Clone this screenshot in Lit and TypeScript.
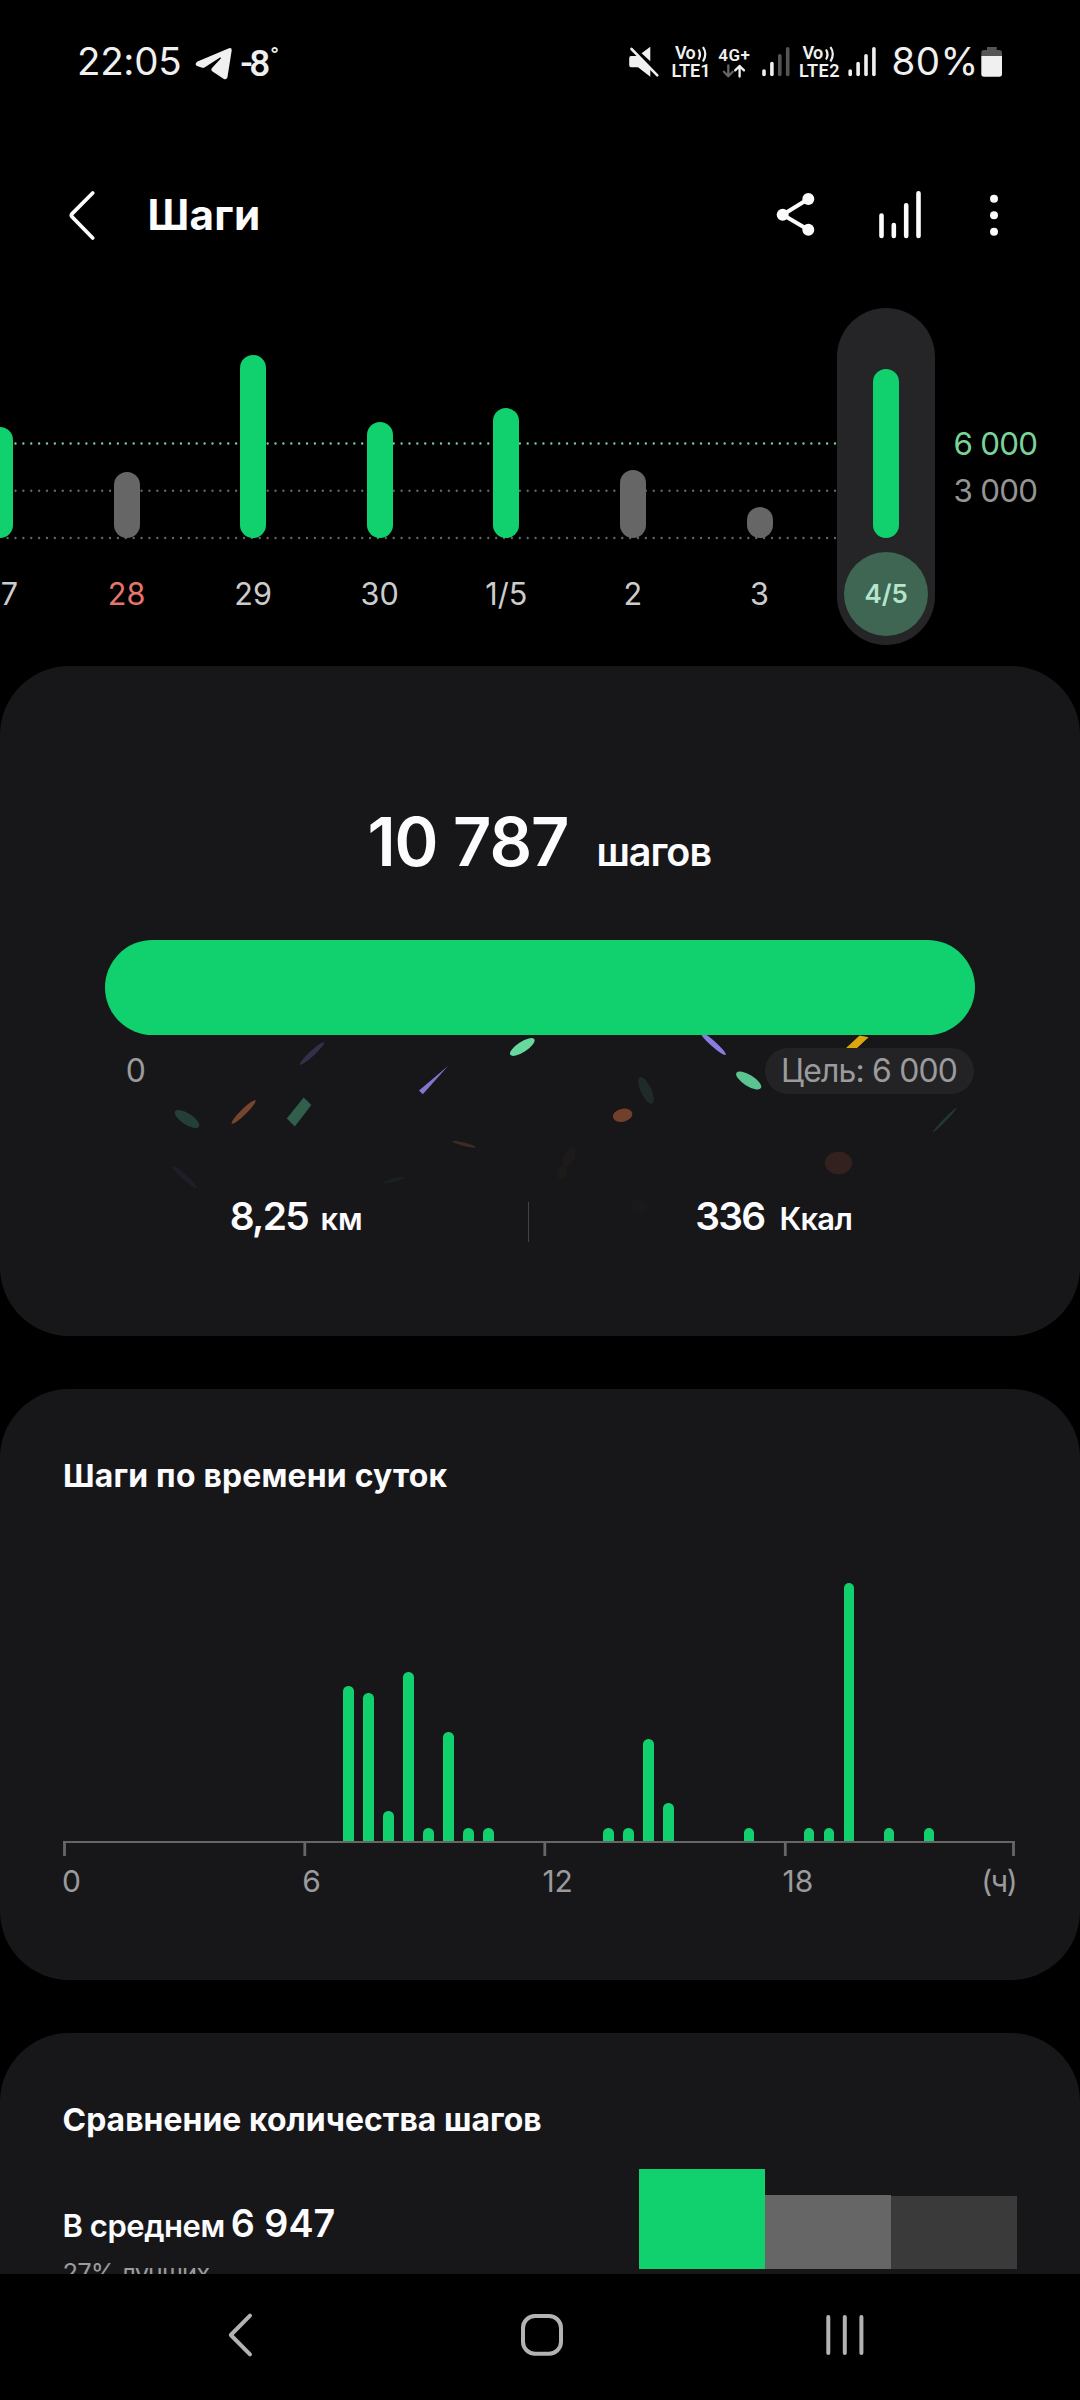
import { LitElement, html, svg, css } from "lit";
import { customElement } from "lit/decorators.js";
import { classMap } from "lit/directives/class-map.js";
import { styleMap } from "lit/directives/style-map.js";

interface Day {
  label: string;
  height: number;
  reached?: boolean;
  holiday?: boolean;
  selected?: boolean;
}

const DAYS: Day[] = [
  { label: "27", height: 111, reached: true },
  { label: "28", height: 66, holiday: true },
  { label: "29", height: 183, reached: true },
  { label: "30", height: 116.5, reached: true },
  { label: "1/5", height: 130.5, reached: true },
  { label: "2", height: 68.5 },
  { label: "3", height: 31 },
  { label: "4/5", height: 169.5, reached: true, selected: true },
];

/* Bar heights keyed by half-hour slot of the day. */
const SLOTS: Record<number, number> = {
  14: 155, 15: 148, 16: 30, 17: 169, 18: 13, 19: 109, 20: 13, 21: 13,
  27: 13, 28: 13, 29: 102, 30: 38, 34: 13, 37: 13, 38: 13, 39: 258, 41: 13, 43: 13,
};

const signal = (x: number, strength: number) => svg`${[69.3, 61.7, 54, 47].map(
  (top, i) => svg`<line x1=${x + 2.2 + i * 7.9} x2=${x + 2.2 + i * 7.9} y1=${top + 1.8} y2="74.4"
    stroke=${i < strength ? "#f0f0f0" : "#555"} stroke-width="3.6" stroke-linecap="round"></line>`
)}`;

@customElement("status-bar")
export class StatusBar extends LitElement {
  static styles = css`
    :host { display: flex; align-items: center; height: 122px; padding: 0 77px; color: #f0f0f0;
      font: 400 38.5px/46px Inter, sans-serif; }
    svg { display: block; flex: none; height: 42px; overflow: visible; font-family: Roboto, sans-serif; font-weight: 600; fill: #f0f0f0; }
    .time { width: 104px; letter-spacing: -0.3px; }
    .plane { width: 38px; margin-left: 14px; }
    .temp { width: 44px; margin-left: 6px; font-size: 37px; font-weight: 500; }
    .system { display: flex; align-items: center; margin-left: auto; }
    .mute { width: 32px; }
    .lte1 { width: 40px; margin-left: 12px; font-size: 18px; }
    .net { width: 34px; margin-left: 6px; font-size: 17px; }
    .sig1 { width: 28px; margin-left: 10px; }
    .lte2 { width: 42px; margin-left: 9px; font-size: 18px; }
    .sig2 { width: 28px; margin-left: 7px; }
    .percent { width: 84px; margin-left: 15.5px; letter-spacing: 0.4px; white-space: nowrap; }
    .battery { width: 22px; margin-left: 5.5px; }
  `;

  private volte(x: number, name: string, width: number) {
    return svg`
      <text x=${x + 2.6} y="59.4" textLength="20.5">Vo</text>
      <path d="M${x + 26} 49.5q3 5 0 10M${x + 30.5} 47q4.6 7 0 14.5" fill="none" stroke="#f0f0f0" stroke-width="2.2"></path>
      <text x=${x - 1} y="77" textLength=${width}>${name}</text>`;
  }

  render() {
    return html`
      <span class="time">22:05</span>
      <svg class="plane" viewBox="195 40 38 42"><path d="M197.5 61.5L229 48.2Q232 47.5 231.7 50.5L227.4 77.5Q226.3 80.3 223.5 78.8L212.5 71.5Q210.5 70 212 68L220.8 58.6Q221.6 56.8 219.6 57.8L204.5 67.4Q203 68 201.5 67.5L197 66Q194 64 197.5 61.5Z"></path></svg>
      <svg class="temp" viewBox="239 40 44 42">
        <text x="240.2 249.3" y="75.5">-8</text><text x="270" y="63.7" font-size="24">°</text>
      </svg>
      <div class="system">
        <svg class="mute" viewBox="628 40 32 42">
          <path d="M631 56H638.5L650.3 68V76.7L638 67.3H631Q629.2 67.3 629.2 65V58.4Q629.2 56 631 56ZM641.6 53.3L650.3 46.7V61.3Z"></path>
          <path d="M631.5 49L657.3 75.3" fill="none" stroke="#f0f0f0" stroke-width="2.6" stroke-linecap="round"></path>
        </svg>
        <svg class="lte1" viewBox="672 40 40 42">${this.volte(672.5, "LTE1", 39)}</svg>
        <svg class="net" viewBox="718 40 34 42">
          <text x="718.3" y="60.5" textLength="31.5">4G+</text>
          <g fill="none" stroke-width="2.3" stroke-linecap="round" stroke-linejoin="round">
            <path d="M728.3 65.5V76M723.9 71.8L728.3 76.2L732.7 71.8" stroke="#666"></path>
            <path d="M739.6 76.5V66M735.2 70.4L739.6 66L744 70.4" stroke="#f0f0f0"></path>
          </g>
        </svg>
        <svg class="sig1" viewBox="762 40 28 42">${signal(761.8, 2)}</svg>
        <svg class="lte2" viewBox="799 40 42 42">${this.volte(800, "LTE2", 40.5)}</svg>
        <svg class="sig2" viewBox="848 40 28 42">${signal(848, 4)}</svg>
        <span class="percent">80%</span>
        <svg class="battery" viewBox="981 40 22 42">
          <path d="M987 47H996.7V50H999.5Q1002 50 1002 52.5V56H981.3V52.5Q981.3 50 983.8 50H987Z" fill="#555"></path>
          <path d="M981.3 56H1002V74Q1002 76.7 999.3 76.7H984Q981.3 76.7 981.3 74Z"></path>
        </svg>
      </div>`;
  }
}

@customElement("title-bar")
export class TitleBar extends LitElement {
  static styles = css`
    :host { display: flex; align-items: center; height: 185px; padding: 0 79.7px 0 66px; color: #fcfcfc; }
    svg { display: block; flex: none; height: 56px; fill: currentColor; }
    h1 { margin: 0 auto 0 51.4px; font: 650 42.2px/56px Inter, sans-serif; letter-spacing: 0.3px; }
    .back { width: 30px; }
    .share { width: 42px; }
    .trend { width: 44px; margin-left: 60px; }
    .more { width: 12px; margin-left: 67.3px; }
  `;

  render() {
    return html`
      <svg class="back" viewBox="66 186 30 56"><path d="M92.7 192L72.2 212.6Q70.6 214.3 72.2 216L92.7 237" fill="none" stroke="currentColor" stroke-width="3.8" stroke-linecap="round"></path></svg>
      <h1>Шаги</h1>
      <svg class="share" viewBox="775 186 42 56">
        <path d="M808.3 198L782.7 213.7L808.3 228.8" fill="none" stroke="currentColor" stroke-width="4"></path>
        <circle cx="808.3" cy="198" r="6"></circle><circle cx="782.7" cy="213.7" r="6"></circle><circle cx="808.3" cy="228.8" r="6"></circle>
      </svg>
      <svg class="trend" viewBox="877 186 44 56">
        <path d="M882 214.5V235M894.3 224V235M906.7 204.2V235M919 192.2V235" fill="none" stroke="currentColor" stroke-width="4.6" stroke-linecap="round" transform="translate(-.5)"></path>
      </svg>
      <svg class="more" viewBox="988.3 186 12 56">
        <circle cx="994.3" cy="197.8" r="4"></circle><circle cx="994.3" cy="214.3" r="4"></circle><circle cx="994.3" cy="230.8" r="4"></circle>
      </svg>`;
  }
}

@customElement("week-chart")
export class WeekChart extends LitElement {
  static styles = css`
    :host { display: flex; position: relative; height: 359px; padding-top: 1px; box-sizing: border-box; overflow: hidden;
      font: 400 30.6px/40px Inter, sans-serif; }
    .grid { position: absolute; left: 0; top: 0; width: 837px; height: 300px; fill: none; stroke-width: 2.4; stroke-linecap: round; }
    .days { display: flex; flex: none; margin-left: -63.3px; position: relative; }
    .slot { display: flex; justify-content: center; width: 126.6px; }
    .day { display: flex; flex-direction: column; align-items: center; width: 98px; height: 337px; border-radius: 49px; }
    .track { display: flex; align-items: flex-end; height: 230px; }
    .bar { width: 26px; border-radius: 13px; background: #666; }
    .reached .bar { background: #11d16f; }
    .label { display: flex; align-items: center; justify-content: center; width: 84px; height: 84px; margin-top: 13.7px;
      color: #ccc; letter-spacing: 0.1px; white-space: nowrap; }
    .holiday .label { color: #e7756c; }
    .selected { background: #252527; }
    .selected .label { border-radius: 50%; background: #3f6553; color: #b5e6cd; font-size: 25.9px; font-weight: 600; letter-spacing: 0; }
    .scale { display: flex; flex-direction: column; padding-top: 113px; margin-left: 4px; font-size: 31.3px; line-height: 47px;
      letter-spacing: -0.7px; color: #949494; white-space: nowrap; }
    .goal { color: #78d49a; }
  `;

  render() {
    return html`
      <svg class="grid" viewBox="0 307 837 300">
        <path d="M7.6 443.5H837" stroke="#79cf9b" stroke-dasharray="0 7.88"></path>
        <path d="M7.6 490.7H837M7.6 538H837" stroke="#646464" stroke-dasharray="0 7.88"></path>
      </svg>
      <div class="days">
        ${DAYS.map((d) => html`
          <div class="slot">
            <div class=${classMap({ day: true, reached: !!d.reached, holiday: !!d.holiday, selected: !!d.selected })}>
              <div class="track"><div class="bar" style=${styleMap({ height: `${d.height}px` })}></div></div>
              <div class="label">${d.label}</div>
            </div>
          </div>`)}
      </div>
      <div class="scale"><span class="goal">6 000</span><span>3 000</span></div>`;
  }
}

@customElement("confetti-burst")
export class ConfettiBurst extends LitElement {
  static styles = css`
    :host { display: block; position: absolute; inset: 0; }
    svg { display: block; width: 1080px; height: 669px; }
  `;

  /* cx, cy, rx, ry, rotation, colour */
  private pieces: [number, number, number, number, number, string][] = [
    [312, 1053.5, 16.4, 2.6, -42.6, "#332e4a"],
    [522.3, 1047, 14.3, 5.2, -33, "#68d99e"],
    [187, 1119, 14.2, 5.6, 33, "#243f35"],
    [243.6, 1112, 16.6, 2.9, -44.5, "#77442e"],
    [464.2, 1144.3, 12.2, 1.7, 14.5, "#3f2a26"],
    [184.5, 1177, 16.6, 2.6, 42, "#1f1d27"],
    [394, 1180, 11, 1.7, -15, "#1b2023"],
    [646, 1090.3, 14.5, 5.4, 65, "#1f2b29"],
    [622.6, 1115.3, 9.9, 6.5, -12, "#713f2a"],
    [569, 1157, 10.5, 5.4, -65, "#1c1b19"],
    [562, 1172, 7, 5, -70, "#1c1b19"],
    [713, 1043.5, 17, 2.7, 42, "#8a7de0"],
    [748.7, 1080.4, 14.4, 5.6, 32, "#5cc491"],
    [944.8, 1120, 16.8, 1.4, -46, "#20382f"],
    [838.5, 1163, 13.6, 11.2, 0, "#33211f"],
    [639, 1207, 9, 7.5, 0, "#19191d"],
  ];

  render() {
    return html`<svg viewBox="0 666 1080 669">
      ${this.pieces.map(([x, y, rx, ry, a, c]) => svg`<ellipse cx=${x} cy=${y} rx=${rx} ry=${ry} fill=${c} transform="rotate(${a} ${x} ${y})"></ellipse>`)}
      <path d="M448 1066L419 1090.5L422.8 1094.2Z" fill="#7f78cc"></path>
      <path d="M303.7 1097.5L311.3 1105L294.8 1126.4L286.8 1118.6Z" fill="#30604b"></path>
      <path d="M859.6 1035.5L868.6 1037.3L856 1049H845Z" fill="#dda510"></path>
    </svg>`;
  }
}

@customElement("today-card")
export class TodayCard extends LitElement {
  static styles = css`
    :host { display: block; position: relative; height: 670px; box-sizing: border-box; padding-top: 146px; border-radius: 69px;
      background: #17171a; color: #fcfcff; font-family: Inter, sans-serif; font-weight: 600; white-space: nowrap; }
    .total { display: flex; align-items: baseline; height: 60px; padding-left: 367.4px; font-size: 66.7px; line-height: 60px; letter-spacing: -1.1px; }
    .unit { margin-left: 28px; font-size: 39.5px; letter-spacing: -1px; }
    .progress { position: relative; height: 95px; margin: 68px 105px 0; border-radius: 48px; background: #11d16f; }
    .range { display: flex; position: relative; justify-content: space-between; align-items: center; height: 46.7px;
      margin: 13px 106px 0 125.7px; font-size: 31.9px; font-weight: 400; line-height: 46px; color: #9b9b9d; letter-spacing: -0.8px; }
    .goal { width: 193px; padding-left: 16px; border-radius: 24px; background: #232325; }
    .stats { display: flex; position: relative; height: 49.4px; margin-top: 98px; font-size: 38.9px; line-height: 46px; letter-spacing: -1.7px; }
    .stat { display: flex; align-items: baseline; }
    .distance { width: 298.6px; padding-left: 229.7px; gap: 12.4px; }
    .energy { padding-left: 165.9px; gap: 15px; }
    .measure { font-size: 30.9px; letter-spacing: 0; }
    .energy .measure { letter-spacing: -0.7px; }
    .rule { width: 1px; margin-top: 9.4px; background: #434346; }
  `;

  render() {
    return html`
      <confetti-burst></confetti-burst>
      <div class="total"><span>10 787</span><span class="unit">шагов</span></div>
      <div class="progress"></div>
      <div class="range"><span>0</span><span class="goal">Цель: 6 000</span></div>
      <div class="stats">
        <div class="stat distance"><span>8,25</span><span class="measure">км</span></div>
        <div class="rule"></div>
        <div class="stat energy"><span>336</span><span class="measure">Ккал</span></div>
      </div>`;
  }
}

@customElement("hours-card")
export class HoursCard extends LitElement {
  static styles = css`
    :host { display: block; height: 591px; box-sizing: border-box; padding: 67px 63px 0; border-radius: 69px; background: #17171a;
      color: #fcfcff; font-family: Inter, sans-serif; white-space: nowrap; }
    h2 { margin: 0; font-size: 31.9px; font-weight: 650; line-height: 40px; letter-spacing: 0.2px; }
    .plot { display: flex; align-items: flex-end; gap: 9.52px; height: 345px; }
    .bar { flex: none; width: 10.5px; border-radius: 5.2px 5.2px 0 0; background: #11d16f; }
    .axis { display: block; width: 952px; height: 15px; fill: none; stroke: #666; }
    .hours { display: flex; margin: 7.8px 0 0 -1px; font-size: 30px; line-height: 34px; color: #9b9b9d; }
    .hour { width: 240.2px; }
    .hour:nth-child(4) { width: 198.7px; }
    .unit { letter-spacing: -1.4px; }
  `;

  render() {
    return html`
      <h2>Шаги по времени суток</h2>
      <div class="plot">
        ${Array.from({ length: 48 }, (_, i) => html`<div class="bar" style=${styleMap({ height: `${SLOTS[i] ?? 0}px` })}></div>`)}
      </div>
      <svg class="axis" viewBox="63 1841 952 15">
        <path d="M63 1842H1015" stroke-width="2"></path>
        <path d="M64.5 1841V1856M304.8 1841V1856M544.8 1841V1856M785.3 1841V1856M1013.5 1841V1856" stroke-width="2.8"></path>
      </svg>
      <div class="hours">
        ${["0", "6", "12", "18"].map((h) => html`<span class="hour">${h}</span>`)}<span class="unit">(ч)</span>
      </div>`;
  }
}

@customElement("compare-card")
export class CompareCard extends LitElement {
  static styles = css`
    :host { display: block; height: 241px; box-sizing: border-box; padding: 67px 63px 0 62.5px; overflow: hidden;
      border-radius: 69px 69px 0 0; background: #17171a; color: #fcfcff; font-family: Inter, sans-serif; white-space: nowrap; }
    h2 { margin: 0; font-size: 31.9px; font-weight: 650; line-height: 40px; letter-spacing: 0.05px; }
    .body { display: flex; justify-content: space-between; }
    .average { display: flex; align-items: baseline; gap: 6px; margin-top: 61.3px; font-size: 37.7px; font-weight: 600; line-height: 44px; }
    .caption { font-size: 31px; letter-spacing: -0.46px; }
    .rank { margin-top: 7.4px; font-size: 25.5px; line-height: 34px; letter-spacing: -0.85px; color: #9b9b9d; }
    .blocks { display: flex; align-items: flex-end; width: 378px; height: 129px; }
    .block { width: 126px; }
    .mine { height: 100px; background: #11d16f; }
    .peers { height: 74px; background: #666; }
    .all { height: 73.5px; background: #3a3a3b; }
  `;

  render() {
    return html`
      <h2>Сравнение количества шагов</h2>
      <div class="body">
        <div>
          <div class="average"><span class="caption">В среднем</span><span>6 947</span></div>
          <div class="rank">27% лучших</div>
        </div>
        <div class="blocks"><div class="block mine"></div><div class="block peers"></div><div class="block all"></div></div>
      </div>`;
  }
}

@customElement("nav-bar")
export class NavBar extends LitElement {
  static styles = css`
    :host { display: flex; align-items: center; justify-content: space-between; flex: none; height: 122px; padding: 0 214px 4px 226px;
      background: #000; }
    svg { display: block; height: 46px; fill: none; stroke: #b3b3b3; stroke-width: 4; stroke-linecap: round; stroke-linejoin: round; }
    .back { width: 28px; }
    .home { width: 46px; margin-left: 6px; }
    .recents { width: 42px; }
  `;

  render() {
    return html`
      <svg class="back" viewBox="226 2312 28 46"><path d="M250 2315.7L230.8 2335L250 2354.4"></path></svg>
      <svg class="home" viewBox="519 2312 46 46"><rect x="523" y="2316" width="38" height="37.8" rx="12"></rect></svg>
      <svg class="recents" viewBox="824 2312 42 46"><path d="M828.3 2317V2353M844.8 2317V2353M861.4 2317V2353"></path></svg>`;
  }
}

@customElement("app-root")
export class AppRoot extends LitElement {
  static styles = css`
    :host { display: flex; flex-direction: column; width: 1080px; height: 2400px; overflow: hidden; background: #000; }
    .cards { display: flex; flex-direction: column; gap: 53px; flex: 1; min-height: 0; overflow: hidden; }
    .cards > * { flex: none; }
  `;

  render() {
    return html`
      <status-bar></status-bar>
      <title-bar></title-bar>
      <week-chart></week-chart>
      <div class="cards">
        <today-card></today-card>
        <hours-card></hours-card>
        <compare-card></compare-card>
      </div>
      <nav-bar></nav-bar>`;
  }
}
